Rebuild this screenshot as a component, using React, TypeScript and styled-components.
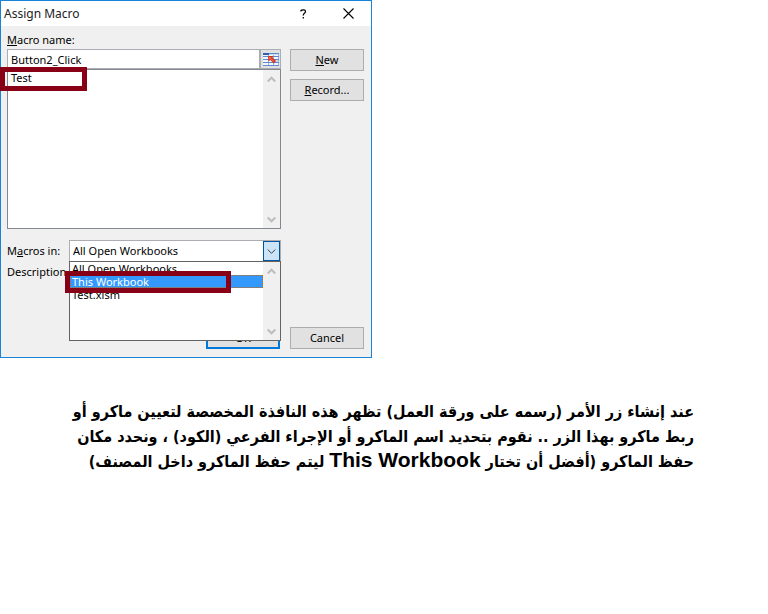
import React from "react";
import styled, { createGlobalStyle } from "styled-components";

const GlobalStyle = createGlobalStyle`
  *, *::before, *::after { box-sizing: border-box; }
  body { margin: 0; background: #fff; }
  button, input, select { font: inherit; color: inherit; margin: 0; border-radius: 0; }
`;

const Page = styled.main`
  min-height: 100vh;
  background: #fff;
  color: #000;
`;

const Dialog = styled.section`
  position: relative;
  width: 372px;
  border: 1px solid #1883d7;
  background: #f0f0f0;
  font: 11px/16px "Noto Sans", "Open Sans", sans-serif;
`;

const TitleBar = styled.header`
  display: flex;
  align-items: center;
  height: 25px;
  padding-left: 3px;
  background: #fff;
`;

const Title = styled.h1`
  flex: 1;
  margin: 0;
  font-size: 12px;
  font-weight: 400;
  color: #222;
`;

const TitleButton = styled.button`
  display: flex;
  align-items: center;
  justify-content: center;
  width: 45px;
  height: 25px;
  padding: 0;
  border: 0;
  background: transparent;
`;

const Body = styled.div`
  padding: 6px 7px 8px 6px;
`;

const Columns = styled.div`
  display: flex;
  align-items: flex-start;
  gap: 9px;
`;

const NameColumn = styled.div`
  flex: 1;
  min-width: 0;
`;

const ButtonColumn = styled.div`
  display: flex;
  flex-direction: column;
  gap: 8px;
  width: 74px;
  padding-top: 17px;
`;

const FieldLabel = styled.label`
  display: block;
`;

const NameField = styled.div`
  display: flex;
  height: 20px;
  margin-top: 1px;
  border: 1px solid #abadb3;
  background: #fff;
`;

const NameInput = styled.input`
  flex: 1;
  min-width: 0;
  padding: 2px 3px 0;
  border: 0;
  outline: 0;
  background: transparent;
`;

const PickerButton = styled.button`
  width: 21px;
  padding: 1px 0 0;
  border: 0;
  border-left: 2px solid #abadb3;
  background: #e1e1e1;
  line-height: 0;
`;

const MacroList = styled.div`
  display: flex;
  height: 160px;
  border: 1px solid #828790;
  background: #fff;
`;

const Options = styled.ul`
  flex: 1;
  min-width: 0;
  margin: 0;
  padding: 0;
  list-style: none;
  line-height: 13px;
`;

const Option = styled.li<{ $selected?: boolean }>`
  height: 13px;
  padding-left: 2px;
  color: ${(p) => (p.$selected ? "#fff" : "#000")};
  background: ${(p) => (p.$selected ? "#3399ff" : "transparent")};
  outline: ${(p) => (p.$selected ? "1px dotted #cc6600" : "none")};
  outline-offset: -1px;
`;

const MacroOption = styled(Option)`
  padding-left: 3px;
  margin-top: 1px;
`;

const ScrollTrack = styled.div`
  display: flex;
  flex-direction: column;
  justify-content: space-between;
  align-items: center;
  width: 17px;
  padding: 6px 0 5px;
  background: #f0f0f0;
  line-height: 0;
`;

const PushButton = styled.button<{ $primary?: boolean }>`
  width: 74px;
  height: 22px;
  padding: 0;
  border: ${(p) => (p.$primary ? "2px solid #0078d7" : "1px solid #adadad")};
  background: #e1e1e1;
`;

const Details = styled.div`
  display: grid;
  grid-template-columns: 62px 212px;
  row-gap: 2px;
  align-items: center;
  margin-top: 11px;
`;

const Combo = styled.div`
  position: relative;
  display: flex;
  height: 22px;
  border: 1px solid #abadb3;
  background: #fff;
`;

const ComboSelect = styled.select`
  flex: 1;
  min-width: 0;
  padding: 0 3px;
  border: 0;
  outline: 0;
  background: transparent;
  appearance: none;
`;

const ComboArrow = styled.button`
  display: flex;
  align-items: center;
  justify-content: center;
  width: 17px;
  padding: 0;
  border: 1px solid #005499;
  background: #cce4f7;
`;

const Popup = styled.div`
  position: absolute;
  z-index: 1;
  top: 20px;
  left: -1px;
  right: -1px;
  display: flex;
  height: 80px;
  border: 1px solid #646464;
  background: #fff;
`;

const Highlight = styled.div<{ $x: number; $y: number; $w: number; $h: number }>`
  position: absolute;
  z-index: 2;
  left: ${(p) => p.$x}px;
  top: ${(p) => p.$y}px;
  width: ${(p) => p.$w}px;
  height: ${(p) => p.$h}px;
  border: 5px solid #880015;
  pointer-events: none;
`;

const Footer = styled.footer`
  display: flex;
  justify-content: flex-end;
  gap: 10px;
  margin-top: 47px;
`;

const Explanation = styled.p`
  margin: 41px 74px 0 0;
  font: bold 16px/25px "DejaVu Sans Condensed", "DejaVu Sans", sans-serif;
  text-align: right;
  white-space: nowrap;
`;

const Line = styled.span`
  display: block;
`;

const Latin = styled.span`
  font-family: "Liberation Sans", sans-serif;
  font-size: 21px;
  line-height: 20px;
`;

function Chevron({ up, color = "#bdbdbd", weight = 2 }: { up?: boolean; color?: string; weight?: number }) {
  return (
    <svg width="9" height="7" viewBox="0 0 9 7" fill="none" stroke={color} strokeWidth={weight} aria-hidden="true">
      <path d={up ? "M.7 5.5 4.5 1.7 8.3 5.5" : "M.7 1.5 4.5 5.3 8.3 1.5"} />
    </svg>
  );
}

function RangeIcon() {
  return (
    <svg width="16" height="13" viewBox="0 0 16 13" aria-hidden="true">
      <path fill="#f2f7fd" d="M0 0h16v13H0z" />
      <path fill="#9db9e2" d="M5 0h1v13H5zM10 0h1v13h-1zM15 0h1v13h-1z" />
      <path fill="#5d8bd0" d="M0 0h16v1H0zM0 3h16v1H0zM0 6h16v1H0zM0 9h16v1H0zM0 12h16v1H0z" />
      <path fill="#2f5fae" d="M0 0h6v2H0z" />
      <path fill="#c9daf2" d="M6 1h9v1H6zM11 7h4v2h-4z" />
      <path fill="#d9331a" d="M5 3h5.5L9.5 4.5l3.5 3.5-2 2.5L7.2 7 5.5 8.5z" />
      <path fill="#f2704f" d="M6 4h2.5l-1 1L11 8l-.7.8L7 5.8 6 6.5z" />
    </svg>
  );
}

function Scroll() {
  return (
    <ScrollTrack>
      <Chevron up />
      <Chevron />
    </ScrollTrack>
  );
}

export default function App() {
  return (
    <Page>
      <GlobalStyle />
      <Dialog role="dialog" aria-labelledby="dialog-title">
        <TitleBar>
          <Title id="dialog-title">Assign Macro</Title>
          <TitleButton aria-label="Help">
            <svg width="7" height="10" viewBox="0 0 7 10" fill="none" stroke="#000" strokeWidth="1.3" aria-hidden="true">
              <path d="M1 2.4V1.5Q1.5.8 3 .8h.7q1.8 0 1.8 1.8 0 1-1.3 1.9-.9.7-.9 2" />
              <path d="M3.3 8v1.6" />
            </svg>
          </TitleButton>
          <TitleButton aria-label="Close">
            <svg width="11" height="11" viewBox="0 0 11 11" stroke="#000" strokeWidth="1.1" aria-hidden="true">
              <path d="M.5.5l10 10M10.5.5l-10 10" />
            </svg>
          </TitleButton>
        </TitleBar>
        <Body>
          <Columns>
            <NameColumn>
              <FieldLabel htmlFor="macro-name"><u>M</u>acro name:</FieldLabel>
              <NameField>
                <NameInput id="macro-name" defaultValue="Button2_Click" />
                <PickerButton aria-label="Select range"><RangeIcon /></PickerButton>
              </NameField>
              <MacroList>
                <Options role="listbox" aria-label="Macros">
                  <MacroOption role="option" aria-selected={false}>Test</MacroOption>
                </Options>
                <Scroll />
              </MacroList>
            </NameColumn>
            <ButtonColumn>
              <PushButton><span><u>N</u>ew</span></PushButton>
              <PushButton><span><u>R</u>ecord...</span></PushButton>
            </ButtonColumn>
          </Columns>
          <Details>
            <label htmlFor="macros-in">M<u>a</u>cros in:</label>
            <Combo>
              <ComboSelect id="macros-in" defaultValue="All Open Workbooks">
                <option>All Open Workbooks</option>
                <option>This Workbook</option>
                <option>Test.xlsm</option>
              </ComboSelect>
              <ComboArrow aria-label="Show workbooks"><Chevron color="#404040" weight={1} /></ComboArrow>
              <Popup>
                <Options role="listbox" aria-label="Workbooks">
                  <Option role="option" aria-selected={false}>All Open Workbooks</Option>
                  <Option role="option" aria-selected $selected>This Workbook</Option>
                  <Option role="option" aria-selected={false}>Test.xlsm</Option>
                </Options>
                <Scroll />
              </Popup>
            </Combo>
            <span>Description</span>
          </Details>
          <Footer>
            <PushButton $primary>OK</PushButton>
            <PushButton>Cancel</PushButton>
          </Footer>
        </Body>
        <Highlight $x={-1} $y={66} $w={87} $h={24} />
        <Highlight $x={64} $y={270} $w={166} $h={22} />
      </Dialog>
      <Explanation dir="rtl" lang="ar">
        <Line>عند إنشاء زر الأمر (رسمه على ورقة العمل) تظهر هذه النافذة المخصصة لتعيين ماكرو أو</Line>
        <Line>ربط ماكرو بهذا الزر .. نقوم بتحديد اسم الماكرو أو الإجراء الفرعي (الكود) ، ونحدد مكان</Line>
        <Line>حفظ الماكرو (أفضل أن تختار <Latin lang="en">This Workbook</Latin> ليتم حفظ الماكرو داخل المصنف)</Line>
      </Explanation>
    </Page>
  );
}
